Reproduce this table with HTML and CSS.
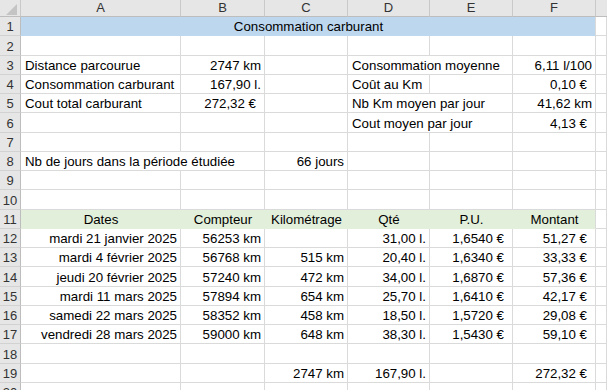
FILE: index.html
```html
<!DOCTYPE html>
<html lang="fr">
<head>
<meta charset="utf-8">
<title>Consommation carburant</title>
<link rel="stylesheet" href="styles.css">
</head>
<body>
<div class="sheet">
  <div class="ch corner"><svg width="21" height="17" viewBox="0 0 21 17"><polygon points="17,4 17,15 6,15" fill="#c4c4c4"/></svg></div>
  <div class="ch">A</div><div class="ch">B</div><div class="ch">C</div><div class="ch">D</div><div class="ch">E</div><div class="ch">F</div><div class="ch last"></div>

  <div class="rh">1</div><div class="c blue ctr s6">Consommation carburant</div><div class="c"></div>

  <div class="rh">2</div><div class="c"></div><div class="c"></div><div class="c"></div><div class="c"></div><div class="c"></div><div class="c"></div><div class="c"></div>

  <div class="rh">3</div><div class="c">Distance parcourue</div><div class="c r">2747 km</div><div class="c"></div><div class="c s2">Consommation moyenne</div><div class="c r">6,11 l/100</div><div class="c"></div>

  <div class="rh">4</div><div class="c">Consommation carburant</div><div class="c r">167,90 l.</div><div class="c"></div><div class="c">Coût au Km</div><div class="c"></div><div class="c r eur">0,10 €</div><div class="c"></div>

  <div class="rh">5</div><div class="c">Cout total carburant</div><div class="c r eur">272,32 €</div><div class="c"></div><div class="c s2">Nb Km moyen par jour</div><div class="c r">41,62 km</div><div class="c"></div>

  <div class="rh">6</div><div class="c"></div><div class="c"></div><div class="c"></div><div class="c s2">Cout moyen par jour</div><div class="c r eur">4,13 €</div><div class="c"></div>

  <div class="rh">7</div><div class="c"></div><div class="c"></div><div class="c"></div><div class="c"></div><div class="c"></div><div class="c"></div><div class="c"></div>

  <div class="rh">8</div><div class="c s2">Nb de jours dans la période étudiée</div><div class="c r">66 jours</div><div class="c"></div><div class="c"></div><div class="c"></div><div class="c"></div>

  <div class="rh">9</div><div class="c"></div><div class="c"></div><div class="c"></div><div class="c"></div><div class="c"></div><div class="c"></div><div class="c"></div>

  <div class="rh">10</div><div class="c"></div><div class="c"></div><div class="c"></div><div class="c"></div><div class="c"></div><div class="c"></div><div class="c"></div>

  <div class="rh">11</div><div class="c green ctr">Dates</div><div class="c green ctr">Compteur</div><div class="c green ctr">Kilométrage</div><div class="c green ctr">Qté</div><div class="c green ctr">P.U.</div><div class="c green ctr endf">Montant</div><div class="c"></div>

  <div class="rh">12</div><div class="c r">mardi 21 janvier 2025</div><div class="c r">56253 km</div><div class="c"></div><div class="c r">31,00 l.</div><div class="c r eur">1,6540 €</div><div class="c r eur">51,27 €</div><div class="c"></div>

  <div class="rh">13</div><div class="c r">mardi 4 février 2025</div><div class="c r">56768 km</div><div class="c r">515 km</div><div class="c r">20,40 l.</div><div class="c r eur">1,6340 €</div><div class="c r eur">33,33 €</div><div class="c"></div>

  <div class="rh">14</div><div class="c r">jeudi 20 février 2025</div><div class="c r">57240 km</div><div class="c r">472 km</div><div class="c r">34,00 l.</div><div class="c r eur">1,6870 €</div><div class="c r eur">57,36 €</div><div class="c"></div>

  <div class="rh">15</div><div class="c r">mardi 11 mars 2025</div><div class="c r">57894 km</div><div class="c r">654 km</div><div class="c r">25,70 l.</div><div class="c r eur">1,6410 €</div><div class="c r eur">42,17 €</div><div class="c"></div>

  <div class="rh">16</div><div class="c r">samedi 22 mars 2025</div><div class="c r">58352 km</div><div class="c r">458 km</div><div class="c r">18,50 l.</div><div class="c r eur">1,5720 €</div><div class="c r eur">29,08 €</div><div class="c"></div>

  <div class="rh">17</div><div class="c r">vendredi 28 mars 2025</div><div class="c r">59000 km</div><div class="c r">648 km</div><div class="c r">38,30 l.</div><div class="c r eur">1,5430 €</div><div class="c r eur">59,10 €</div><div class="c"></div>

  <div class="rh">18</div><div class="c"></div><div class="c"></div><div class="c"></div><div class="c"></div><div class="c"></div><div class="c"></div><div class="c"></div>

  <div class="rh">19</div><div class="c"></div><div class="c"></div><div class="c r">2747 km</div><div class="c r">167,90 l.</div><div class="c"></div><div class="c r eur">272,32 €</div><div class="c"></div>

  <div class="rh">20</div><div class="c"></div><div class="c"></div><div class="c"></div><div class="c"></div><div class="c"></div><div class="c"></div><div class="c"></div>
</div>
</body>
</html>
```

FILE: styles.css
```css
* { box-sizing: border-box; }
html, body { margin: 0; padding: 0; background: #ffffff; overflow: hidden; }
body { font-family: "Liberation Sans", Arial, sans-serif; font-size: 13.3px; color: #000; }

.sheet {
  display: grid;
  grid-template-columns: 21px 160px 84px 83px 82px 83px 83px 1fr;
  grid-template-rows: 17px repeat(20, 19.26px);
  width: 607px;
  height: 390px;
  overflow: hidden;
}

.ch {
  background: #e6e6e6;
  border-right: 1px solid #c9c9c9;
  border-bottom: 1px solid #bdbdbd;
  color: #333;
  font-size: 13px;
  display: flex;
  align-items: flex-end;
  justify-content: center;
  line-height: 15px;
  padding-bottom: 1px;
  white-space: nowrap;
}
.ch.corner { padding: 0; display: block; }
.ch.corner svg { display: block; }
.ch.last { border-right: none; }

.rh {
  background: #e6e6e6;
  border-right: 1px solid #bdbdbd;
  border-bottom: 1px solid #d2d2d2;
  color: #333;
  font-size: 13px;
  display: flex;
  align-items: flex-end;
  justify-content: center;
  line-height: 15px;
  padding-bottom: 1px;
}

.c {
  border-right: 1px solid #dadada;
  border-bottom: 1px solid #dadada;
  display: flex;
  align-items: flex-end;
  padding: 0 3px 0 4px;
  line-height: 16px;
  white-space: nowrap;
  overflow: visible;
  min-width: 0;
}
.r { justify-content: flex-end; }
.ctr { justify-content: center; }
.eur { padding-right: 8px; }
.s2 { grid-column: span 2; }
.s6 { grid-column: span 6; }

.blue { background: #bdd7ee; border-bottom-color: #bdd7ee; }
.green { background: #e2efda; border-right-color: #e2efda; border-bottom-color: #e2efda; }
.green.endf { border-right-color: #dadada; }
```
